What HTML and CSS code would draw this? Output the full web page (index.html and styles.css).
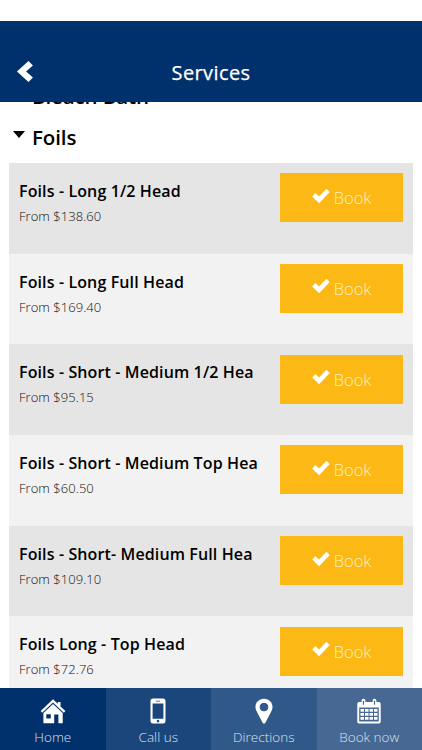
FILE: index.html
```html
<!DOCTYPE html>
<html lang="en">
<head>
<meta charset="utf-8">
<title>Services</title>
<link rel="stylesheet" href="styles.css">
</head>
<body>
<svg width="0" height="0" class="defs"><defs>
<symbol id="check" viewBox="0 0 18 16"><path d="M.2 8.500 3.400 5.100 7 8.400 14.500.8 17.700 4.100 7.100 15.200Z"/></symbol>
</defs></svg>
<div class="app">
<header class="header">
<svg class="back" viewBox="0 0 16 20"><path d="M11.8 0 16 4.200 9.500 9.900 16 15.600 11.800 19.900.8 9.900Z"/></svg>
<h1>Services</h1>
</header>
<main class="content">
<h2 class="category previous"><span>Bleach Bath</span></h2>
<h2 class="category"><i class="arrow"></i><span>Foils</span></h2>
<ul class="services">
<li><div class="info"><h3>Foils - Long 1/2 Head</h3><p>From $138.60</p></div><a class="book"><svg><use href="#check"/></svg><span>Book</span></a></li>
<li><div class="info"><h3>Foils - Long Full Head</h3><p>From $169.40</p></div><a class="book"><svg><use href="#check"/></svg><span>Book</span></a></li>
<li><div class="info"><h3>Foils - Short - Medium 1/2 Hea</h3><p>From $95.15</p></div><a class="book"><svg><use href="#check"/></svg><span>Book</span></a></li>
<li><div class="info"><h3>Foils - Short - Medium Top Hea</h3><p>From $60.50</p></div><a class="book"><svg><use href="#check"/></svg><span>Book</span></a></li>
<li><div class="info"><h3>Foils - Short- Medium Full Hea</h3><p>From $109.10</p></div><a class="book"><svg><use href="#check"/></svg><span>Book</span></a></li>
<li><div class="info"><h3>Foils Long - Top Head</h3><p>From $72.76</p></div><a class="book"><svg><use href="#check"/></svg><span>Book</span></a></li>
</ul>
</main>
<nav class="tabs">
<a class="tab home"><svg viewBox="0 0 26 26"><path d="M.7 13 13 1.2l4.800 4.600V3.900h2.700v4.500L25.400 13l-1.500 1.700L13 4.400 2.100 14.700Z"/><path fill-rule="evenodd" d="M13 6 22.700 15v10.200h-4.300v-8.600h-4.200v8.600H3.400V15ZM6.300 16.200v4.200h4.500v-4.200Z"/></svg><span>Home</span></a>
<a class="tab call"><svg viewBox="0 0 26 26"><path fill-rule="evenodd" d="M8 .5h10q2.500 0 2.500 2.500v20q0 2.500-2.500 2.500H8Q5.500 25.500 5.500 23V3Q5.500.500 8 .5ZM7.600 5.500v15.200h10.800V5.500ZM10.800 2.700v.8h4.400v-.8ZM13 21.800a1.300 1.300 0 1 0 .01 0Z"/></svg><span>Call us</span></a>
<a class="tab directions"><svg viewBox="0 0 26 26"><path fill-rule="evenodd" d="M13 .7c5 0 8.500 3.600 8.500 8.300 0 2-.6 3.300-1.500 5l-5.600 10.700q-1.400 1.700-2.800 0L6 14c-.9-1.700-1.500-3-1.500-5C4.500 4.300 8 .7 13 .7ZM13 4.700a4.300 4.300 0 1 0 .01 0Z"/></svg><span>Directions</span></a>
<a class="tab now"><svg viewBox="0 0 26 26"><path fill-rule="evenodd" d="M3 4h2.600V2.500Q5.600.800 7.500.8T9.400 2.500V4h7.200V2.500q0-1.700 1.900-1.700t1.900 1.700V4H23q1.700 0 1.700 1.700v18q0 1.700-1.700 1.700H3q-1.700 0-1.700-1.700v-18Q1.300 4 3 4ZM3.200 9.600v13.900h19.600V9.600ZM6.900 2.700v4h1.200v-4ZM17.900 2.700v4h1.200v-4Z"/><path d="M4.500 11h3.500v2.800H4.500ZM9 11h3.500v2.800H9ZM13.500 11H17v2.800h-3.500ZM18 11h3.500v2.800H18ZM4.500 15h3.500v2.800H4.500ZM9 15h3.500v2.800H9ZM13.500 15H17v2.800h-3.500ZM18 15h3.500v2.800H18ZM4.500 19h3.500v2.800H4.500ZM9 19h3.500v2.800H9ZM13.500 19H17v2.800h-3.500ZM18 19h3.500v2.800H18Z"/></svg><span>Book now</span></a>
</nav>
</div>
</body>
</html>
```
FILE: styles.css
```css
* { box-sizing: border-box; }
body { margin: 0; background: #fff; font-family: "Open Sans", "Noto Sans", sans-serif; }
h1, h2, h3, p, ul { margin: 0; padding: 0; }
.defs { display: none; }
svg { fill: #fff; }
.app { height: 750px; padding-top: 21px; display: flex; flex-direction: column; overflow: hidden; }
.header { flex: none; height: 81px; padding: 22px 16px 0; background: #00316c; display: grid; grid-template-columns: 40px 1fr 40px; align-items: center; }
.back { width: 17px; height: 21px; margin-top: -3px; }
h1 { color: #fff; font-size: 20px; font-weight: 500; text-align: center; line-height: 28px; letter-spacing: .4px; -webkit-text-stroke: .25px #fff; }
.content { flex: 1; min-height: 0; overflow: hidden; padding: 0 9px; }
.category { display: flex; height: 41px; padding-left: 23px; position: relative; font-size: 20.500px; font-weight: 600; line-height: 31px; letter-spacing: -.1px; }
.previous { margin-top: -21px; }
.arrow { position: absolute; left: 4px; top: 9px; border: 6px solid transparent; border-top: 7px solid #000; border-bottom: 0; }
.services { list-style: none; }
.services li { display: flex; justify-content: space-between; align-items: flex-start; height: 90.700px; padding: 10.300px 10px 0; background: #f2f2f2; }
.services li:nth-child(odd) { background: #e5e5e5; }
.info { padding-top: 5.700px; white-space: nowrap; }
h3 { font-size: 16px; font-weight: 600; line-height: 24px; letter-spacing: .12px; }
.info p { font-size: 13px; font-weight: 300; line-height: 26px; letter-spacing: .05px; color: #111; }
.book { display: flex; align-items: center; justify-content: center; gap: 4px; width: 123px; height: 49px; background: #fcb815; color: #fff1bd; font-size: 16.500px; font-weight: 300; }
.book svg { width: 18px; height: 16px; margin-top: -4px; }
.tabs { flex: none; height: 62px; display: grid; grid-template-columns: repeat(4, 1fr); }
.tab { display: flex; flex-direction: column; align-items: center; padding-top: 10px; color: #d5e3f5; font-size: 13.500px; font-weight: 300; line-height: 27px; }
.tab svg { width: 26px; height: 26px; flex: none; }
.home { background: #00316c; }
.call { background: #1a467c; }
.directions { background: #305888; }
.now { background: #466892; }
```
